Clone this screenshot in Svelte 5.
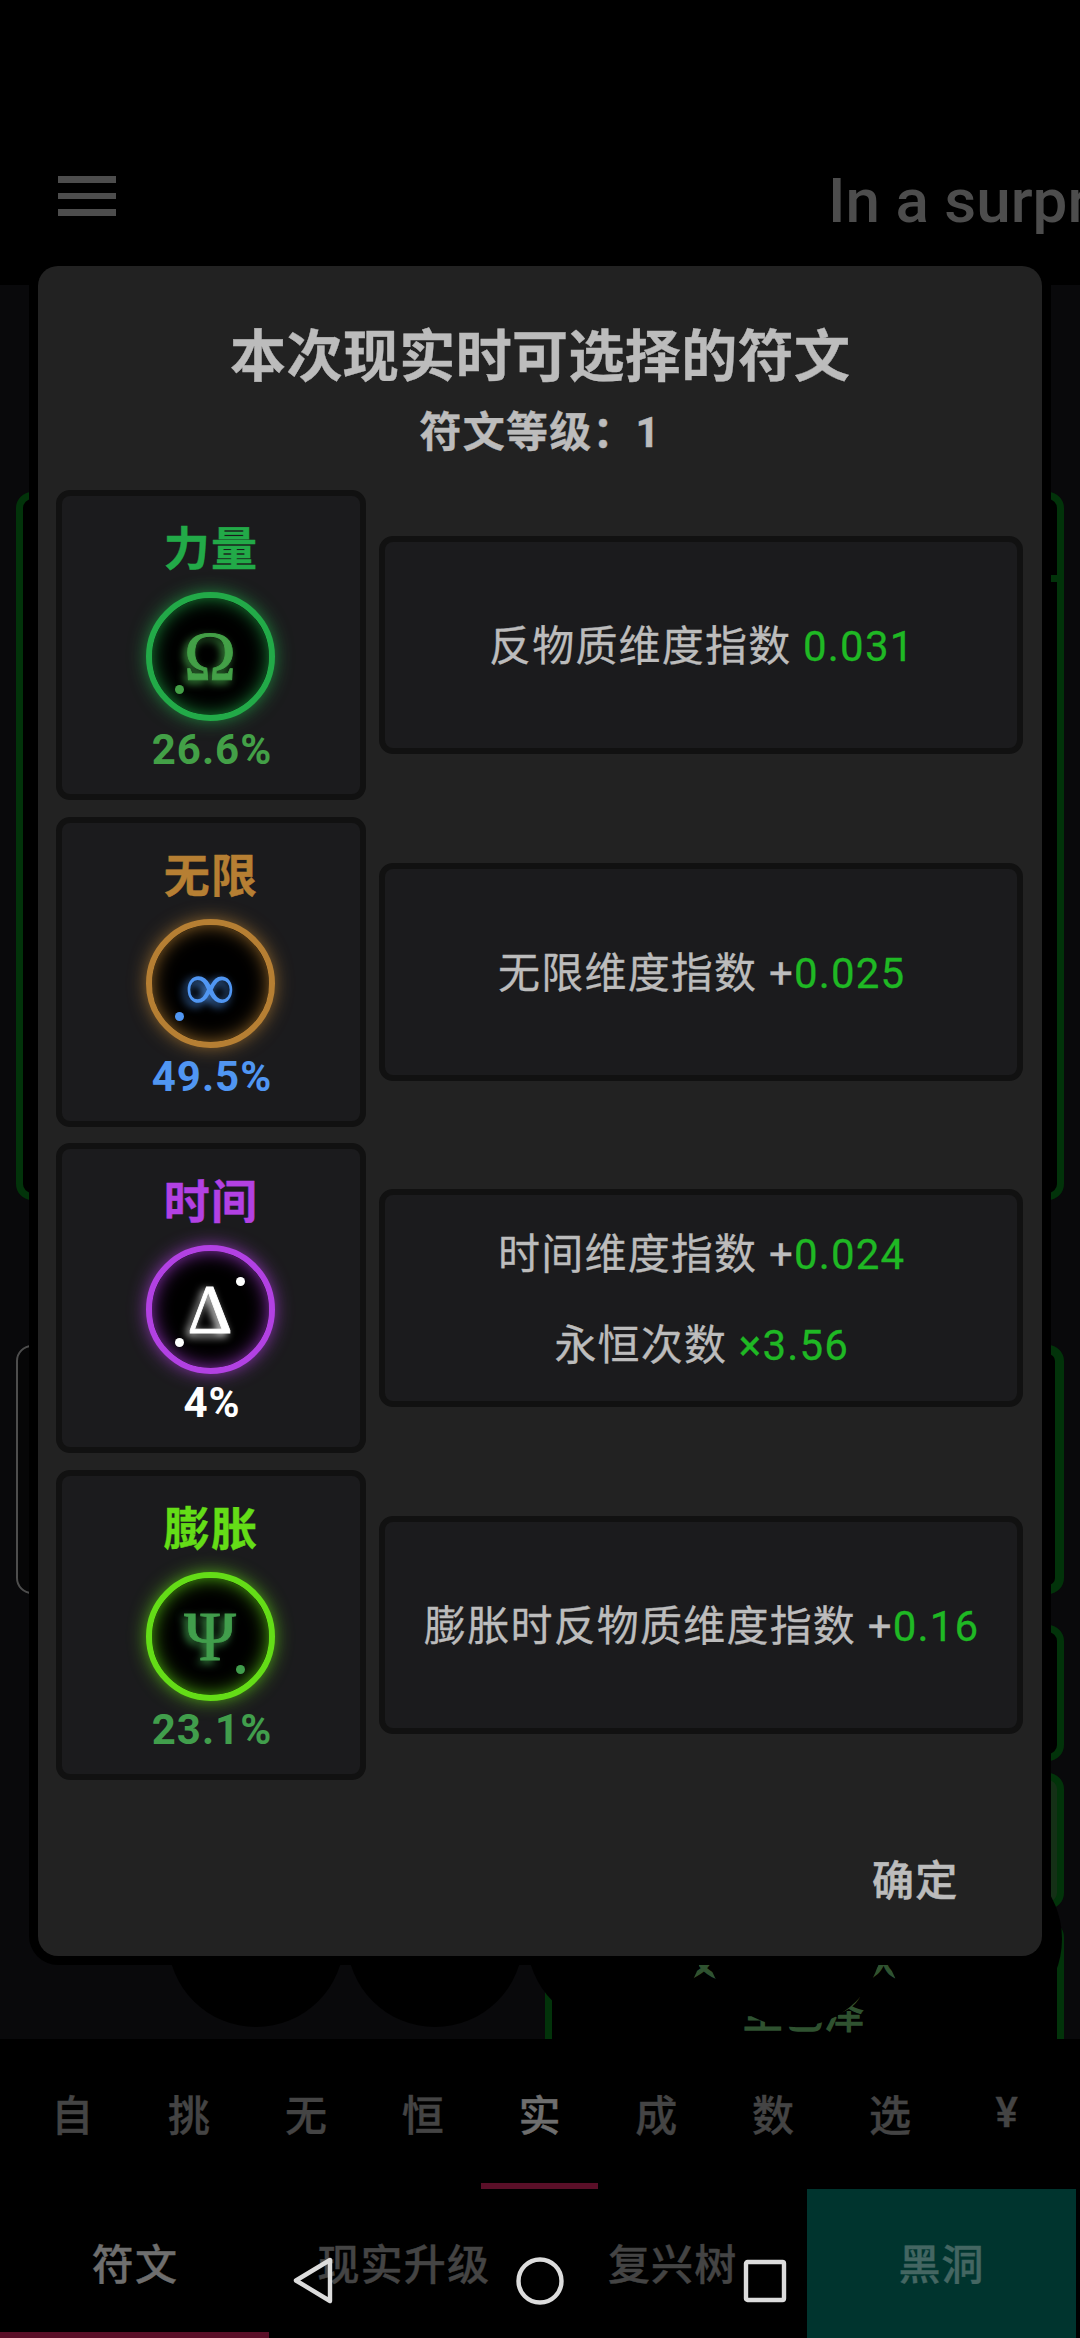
<script lang="ts">
	type Effect = { text: string; value: string };
	type Rune = {
		name: string;
		tone: string;
		rarity: string;
		symbol: string;
		chance: string;
		dots: string[];
		effects: Effect[];
	};

	const runes: Rune[] = [
		{
			name: '力量',
			tone: '#22aa48',
			rarity: '#43a047',
			symbol: 'Ω',
			chance: '26.6%',
			dots: ['bl'],
			effects: [{ text: '反物质维度指数 ', value: '0.031' }]
		},
		{
			name: '无限',
			tone: '#b67f33',
			rarity: '#5096f2',
			symbol: '∞',
			chance: '49.5%',
			dots: ['bl'],
			effects: [{ text: '无限维度指数 +', value: '0.025' }]
		},
		{
			name: '时间',
			tone: '#b241e3',
			rarity: '#ffffff',
			symbol: 'Δ',
			chance: '4%',
			dots: ['bl', 'tr'],
			effects: [
				{ text: '时间维度指数 +', value: '0.024' },
				{ text: '永恒次数 ', value: '×3.56' }
			]
		},
		{
			name: '膨胀',
			tone: '#64dd17',
			rarity: '#419e4c',
			symbol: 'Ψ',
			chance: '23.1%',
			dots: ['br'],
			effects: [{ text: '膨胀时反物质维度指数 +', value: '0.16' }]
		}
	];

	const tabs = ['自', '挑', '无', '恒', '实', '成', '数', '选', '¥'];
	const subtabs = ['符文', '现实升级', '复兴树', '黑洞'];
	const slots = [0, 1, 2, 3, 4];

	let tab = $state(4);
	let subtab = $state(0);
</script>

<div class="app">
	<header>
		<button class="menu" aria-label="menu"><i></i><i></i><i></i></button>
		<div class="news">In a surpr</div>
	</header>

	<main>
		<div class="panel left-top"></div>
		<div class="panel plain"></div>
		<div class="panel right-top"><hr /></div>
		<div class="panel right-a"></div>
		<div class="panel right-b"></div>
		<div class="panel right-c"></div>
		<div class="panel reality">
			<span class="line-a">文</span>
			<span class="line-b">次</span>
			<span class="line-c">至已泽</span>
		</div>
		<div class="slots">
			{#each slots as slot (slot)}
				<span class="slot"></span>
			{/each}
		</div>
	</main>

	<nav class="tabs">
		{#each tabs as name, i}
			<button class:active={tab === i} onclick={() => (tab = i)}>{name}</button>
		{/each}
	</nav>
	<nav class="subtabs">
		{#each subtabs as name, i}
			<button class:active={subtab === i} class:hole={i === 3} onclick={() => (subtab = i)}>
				{name}
			</button>
		{/each}
	</nav>

	<div class="dialog">
		<h1>本次现实时可选择的符文</h1>
		<h2>符文等级：1</h2>
		<div class="runes">
			{#each runes as rune}
				<div class="rune" style="--tone: {rune.tone}; --rarity: {rune.rarity}">
					<div class="card">
						<div class="name">{rune.name}</div>
						<div class="circle">
							<span class="symbol" class:low={rune.symbol === '∞'}>{rune.symbol}</span>
							{#each rune.dots as dot}
								<i class="dot {dot}"></i>
							{/each}
						</div>
						<div class="chance">{rune.chance}</div>
					</div>
					<div class="effects">
						{#each rune.effects as effect}
							<p>{effect.text}<b>{effect.value}</b></p>
						{/each}
					</div>
				</div>
			{/each}
		</div>
		<div class="actions"><button>确定</button></div>
	</div>

	<div class="system">
		<svg viewBox="0 0 44 50"><path d="M38 4 L4 24.500 L38 45 Z" /></svg>
		<svg viewBox="0 0 50 50"><circle cx="25" cy="25" r="21.500" /></svg>
		<svg viewBox="0 0 44 50"><rect x="3" y="6" width="38" height="38" rx="1.500" /></svg>
	</div>
</div>

<style>
	:global(body) {
		background: #000;
	}

	.app {
		position: relative;
		display: flex;
		flex-direction: column;
		width: 1080px;
		height: 2338px;
		overflow: hidden;
		background: #000;
		font-family: Roboto, 'Noto Sans CJK SC', sans-serif;
		font-size: 42px;
		letter-spacing: 1.2px;
	}

	button {
		padding: 0;
		border: 0;
		background: none;
		font: inherit;
		letter-spacing: inherit;
		color: inherit;
	}

	header {
		flex: none;
		display: flex;
		align-items: center;
		justify-content: space-between;
		height: 285px;
		padding-left: 57.500px;
		box-sizing: border-box;
	}

	.menu {
		display: flex;
		flex-direction: column;
		gap: 10px;
		padding-top: 107px;
	}

	.menu i {
		width: 58px;
		height: 6.700px;
		background: #4d4d4d;
	}

	.news {
		width: 252px;
		padding-top: 116px;
		overflow: hidden;
		white-space: nowrap;
		font-size: 62px;
		font-weight: 500;
		letter-spacing: 0;
		color: #4d4d4d;
	}

	main {
		flex: none;
		position: relative;
		height: 1754px;
		overflow: hidden;
		background: #09090b;
	}

	.panel {
		position: absolute;
		box-sizing: border-box;
		border: 7px solid #02330a;
		border-radius: 16px;
		background: #000;
	}

	.left-top {
		left: 16px;
		top: 207px;
		width: 500px;
		height: 708px;
	}

	.plain {
		left: 16px;
		top: 1060px;
		width: 500px;
		height: 249px;
		border: 2px solid #4d4d4d;
		background: #060607;
	}

	.right-top {
		right: 16px;
		top: 207px;
		width: 500px;
		height: 708px;
	}

	.right-top hr {
		height: 7px;
		margin: 76px 0 0;
		border: 0;
		background: #02330a;
	}

	.right-a {
		right: 16px;
		top: 1060px;
		width: 500px;
		height: 249px;
		border-width: 9px;
	}

	.right-b {
		right: 16px;
		top: 1340px;
		width: 500px;
		height: 136px;
	}

	.right-c {
		right: 16px;
		top: 1488px;
		width: 500px;
		height: 136px;
		background: #143016;
	}

	.reality {
		left: 545px;
		top: 1636px;
		width: 519px;
		height: 160px;
		font-size: 39.500px;
		-webkit-text-stroke: 1.4px;
		color: #2f5230;
	}

	.reality span {
		position: absolute;
		line-height: 60px;
		white-space: nowrap;
	}

	.line-a {
		left: 132px;
		top: 5px;
	}

	.line-b {
		left: 307px;
		top: 3px;
	}

	.line-c {
		left: 191px;
		top: 57px;
	}

	.slots {
		position: absolute;
		left: 167.500px;
		top: 1566px;
		display: flex;
		gap: 3.500px;
	}

	.slot {
		width: 176px;
		height: 176px;
		border-radius: 50%;
		background: #000;
	}

	nav {
		display: flex;
		font-weight: 500;
		color: #444;
	}

	nav button {
		padding: 2px 0 0 1px;
		border: solid transparent;
		border-width: 0 0 6.500px;
		box-sizing: border-box;
		-webkit-text-stroke: 0.4px;
	}

	nav .active {
		border-color: #5a0f28;
		color: #6e6e6e;
	}

	.tabs {
		height: 150px;
		padding-left: 14px;
	}

	.tabs button {
		width: 116.800px;
	}

	.subtabs {
		height: 149px;
	}

	.subtabs button {
		width: 268.900px;
	}

	.subtabs .hole {
		background: #00342e;
		color: #446662;
	}

	.dialog {
		position: absolute;
		left: 37.500px;
		top: 266px;
		display: flex;
		flex-direction: column;
		width: 1004px;
		height: 1690px;
		padding: 0 18px;
		box-sizing: border-box;
		border-radius: 20px;
		background: #222;
		box-shadow: 0 0 0 9px #000;
		color: #bcbcbc;
	}

	h1,
	h2 {
		margin: 0;
		padding-left: 1.500px;
		text-align: center;
		font-weight: 700;
		-webkit-text-stroke: 0.4px;
	}

	h1 {
		padding-top: 50px;
		font-size: 56px;
		line-height: 82px;
		letter-spacing: 0.400px;
	}

	h2 {
		height: 92px;
		font-size: 42px;
		line-height: 70px;
	}

	.runes {
		display: flex;
		flex-direction: column;
		gap: 16.600px;
	}

	.rune {
		display: flex;
		align-items: center;
		gap: 13px;
	}

	.card,
	.effects {
		display: flex;
		flex-direction: column;
		align-items: center;
		justify-content: center;
		box-sizing: border-box;
		border: 6.500px solid #111;
		border-radius: 14px;
		background: #1b1b1d;
	}

	.card {
		width: 310px;
		height: 310px;
		padding-top: 6px;
		font-weight: 700;
	}

	.name {
		padding-left: 1px;
		font-size: 46px;
		line-height: 66px;
		-webkit-text-stroke: 0.4px;
		color: var(--tone);
	}

	.circle {
		position: relative;
		width: 129px;
		height: 129px;
		margin: 10px 1px 0 0;
		box-sizing: border-box;
		border: 6px solid var(--tone);
		border-radius: 50%;
		background: #000;
		box-shadow:
			0 0 20px -3px var(--tone),
			inset 0 0 20px -3px var(--tone);
		text-align: center;
	}

	.symbol {
		display: block;
		font: 400 70px/117px 'Liberation Serif', serif;
		letter-spacing: 0;
		-webkit-text-stroke: 0.8px;
		color: var(--rarity);
		text-shadow: -3px 3px 9px var(--rarity);
	}

	.low {
		padding-top: 3px;
		-webkit-text-stroke: 0;
	}

	.dot {
		position: absolute;
		width: 9px;
		height: 9px;
		border-radius: 50%;
		background: var(--rarity);
	}

	.bl {
		left: 23px;
		top: 87px;
	}

	.br {
		left: 84px;
		top: 87px;
	}

	.tr {
		left: 84px;
		top: 26px;
	}

	.chance {
		margin-top: -1px;
		padding-left: 3px;
		line-height: 60px;
		letter-spacing: 1px;
		color: var(--rarity);
	}

	.effects {
		width: 644.500px;
		height: 218px;
		padding: 3px 0 0 2px;
	}

	.effects p {
		margin: 0;
		line-height: 91px;
		-webkit-text-stroke: 0.3px;
	}

	.effects b {
		font-weight: 400;
		color: #1fb824;
	}

	.actions {
		display: flex;
		justify-content: flex-end;
		padding: 67px 65px 0 0;
		font-weight: 500;
		-webkit-text-stroke: 0.6px;
	}

	.system {
		position: absolute;
		left: 292px;
		top: 2256px;
		display: flex;
		align-items: center;
		justify-content: space-between;
		width: 495px;
	}

	.system svg {
		height: 50px;
		fill: none;
		stroke: #dcdcdc;
		stroke-width: 4.400;
		stroke-linejoin: round;
	}
</style>
